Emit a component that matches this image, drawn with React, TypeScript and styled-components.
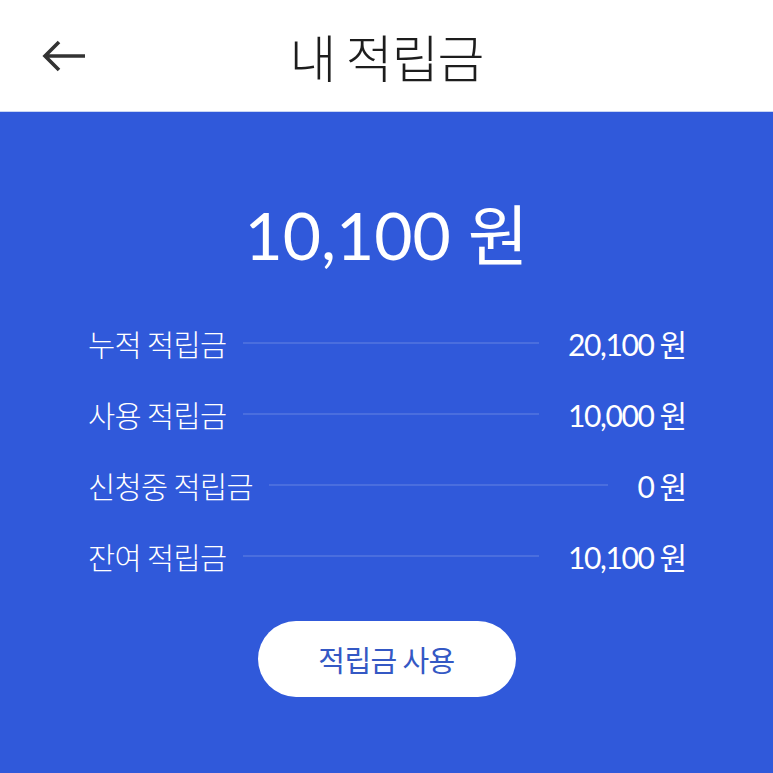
import styled, { createGlobalStyle } from "styled-components";

const GlobalStyle = createGlobalStyle`
  html, body {
    margin: 0;
    padding: 0;
    background: #3059da;
  }
  body {
    font-family: Lato, "Noto Sans CJK KR", sans-serif;
  }
`;

const Page = styled.div`
  width: 773px;
  height: 773px;
  display: flex;
  flex-direction: column;
  background: #3059da;
  overflow: hidden;
`;

const Header = styled.header`
  height: 112px;
  background: #ffffff;
  display: flex;
  align-items: center;
  justify-content: center;
  position: relative;
  border-bottom: 1px solid #c9d6f3;
  box-sizing: border-box;
`;

const BackButton = styled.button`
  position: absolute;
  left: 36px;
  top: 32px;
  width: 56px;
  height: 48px;
  border: none;
  background: none;
  padding: 0;
  display: flex;
  align-items: center;
  justify-content: center;
  color: #333333;
`;

const Title = styled.h1`
  margin: 0;
  font-family: "Noto Sans CJK KR", sans-serif;
  font-weight: 300;
  font-size: 51px;
  color: #1d1d1d;
  letter-spacing: -1px;
`;

const Content = styled.main`
  display: flex;
  flex-direction: column;
  align-items: center;
  padding: 87px 86px 0 86px;
`;

const Total = styled.div`
  font-family: Lato, "Noto Sans CJK KR", sans-serif;
  font-size: 66px;
  color: #ffffff;
  line-height: 72px;
  margin-bottom: 51px;
`;

const List = styled.div`
  width: 100%;
  display: flex;
  flex-direction: column;
  gap: 29px;
`;

const Row = styled.div`
  display: flex;
  align-items: center;
  height: 42px;
  padding-left: 2px;
  color: #ffffff;
`;

const Label = styled.span`
  font-family: "Noto Sans CJK KR", sans-serif;
  font-weight: 300;
  font-size: 29.5px;
  letter-spacing: -0.6px;
  white-space: nowrap;
`;

const Divider = styled.span`
  flex: 1;
  height: 2px;
  margin: 0 29px 0 16px;
  background: rgba(255, 255, 255, 0.13);
`;

const Value = styled.span`
  font-family: Lato, "Noto Sans CJK KR", sans-serif;
  font-size: 30px;
  letter-spacing: -1.4px;
  white-space: nowrap;
`;

const Won = styled.span`
  font-family: "Noto Sans CJK KR", sans-serif;
  font-weight: 400;
  margin-left: 6px;
  letter-spacing: 0;
`;

const UseButton = styled.button`
  margin-top: 44px;
  width: 258px;
  height: 76px;
  border: none;
  border-radius: 38px;
  background: #ffffff;
  color: #3458c4;
  font-family: "Noto Sans CJK KR", sans-serif;
  font-size: 29px;
  font-weight: 400;
  letter-spacing: -0.6px;
`;

const rows = [
  { label: "누적 적립금", value: "20,100" },
  { label: "사용 적립금", value: "10,000" },
  { label: "신청중 적립금", value: "0" },
  { label: "잔여 적립금", value: "10,100" },
];

export default function App() {
  return (
    <Page>
      <GlobalStyle />
      <Header>
        <BackButton aria-label="뒤로">
          <svg width="46" height="34" viewBox="0 0 46 34" fill="none">
            <path
              d="M44 17H4M18 3L4 17l14 14"
              stroke="currentColor"
              strokeWidth="3.6"
              strokeLinecap="butt"
              strokeLinejoin="miter"
            />
          </svg>
        </BackButton>
        <Title>내 적립금</Title>
      </Header>
      <Content>
        <Total>10,100 원</Total>
        <List>
          {rows.map((r) => (
            <Row key={r.label}>
              <Label>{r.label}</Label>
              <Divider />
              <Value>
                {r.value}
                <Won>원</Won>
              </Value>
            </Row>
          ))}
        </List>
        <UseButton>적립금 사용</UseButton>
      </Content>
    </Page>
  );
}
